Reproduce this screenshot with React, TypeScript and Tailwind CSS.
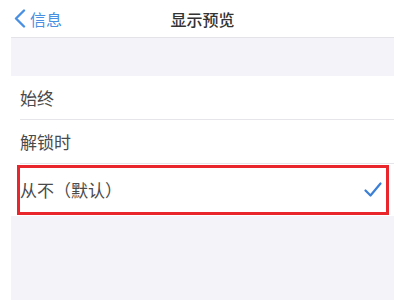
const OPTIONS = ["始终", "解锁时"];

function Chevron() {
  return (
    <svg width="13" height="19" viewBox="0 0 13 19" fill="none">
      <path d="M11 1.5 L3 9.5 L11 17.5" stroke="#4a90e2" strokeWidth="2.4" strokeLinecap="round" strokeLinejoin="round" />
    </svg>
  );
}

function Check() {
  return (
    <svg width="18" height="16" viewBox="0 0 18 16" fill="none">
      <path d="M1.5 8.5 L6.5 13.5 L16.5 1.5" stroke="#3b7fd6" strokeWidth="2.2" strokeLinecap="round" strokeLinejoin="round" />
    </svg>
  );
}

export default function App() {
  return (
    <div
      className="w-[400px] h-[300px] bg-white overflow-hidden flex"
      style={{ fontFamily: '"Noto Sans CJK SC", "Noto Sans", sans-serif' }}
    >
      <div className="ml-[11px] w-[383px] h-full flex flex-col bg-[#f4f3f9]">
        {/* nav bar */}
        <div className="relative h-[38px] bg-white border-b border-[#e4e4e8] flex items-center justify-center">
          <div className="absolute left-[2px] top-[9px] flex items-center gap-[4px]">
            <Chevron />
            <span className="text-[16px] leading-none text-[#4a90e2]">信息</span>
          </div>
          <span className="text-[16px] font-medium text-[#333]">显示预览</span>
        </div>

        <div className="h-[38px]" />

        <div className="bg-white flex flex-col">
          {OPTIONS.map((label) => (
            <div key={label} className="ml-[9px] h-[44px] border-b border-[#e6e6ea] flex items-center">
              <span className="text-[17px] text-[#4a4a4a]">{label}</span>
            </div>
          ))}
          <div className="relative h-[52px] pl-[9px] pr-[12px] flex items-center justify-between">
            <span className="text-[17px] text-[#4a4a4a]">从不（默认）</span>
            <Check />
            <div className="absolute left-[6px] right-[5px] top-[1px] bottom-[1px] border-[3px] border-[#e8262c]" />
          </div>
        </div>
      </div>
    </div>
  );
}
